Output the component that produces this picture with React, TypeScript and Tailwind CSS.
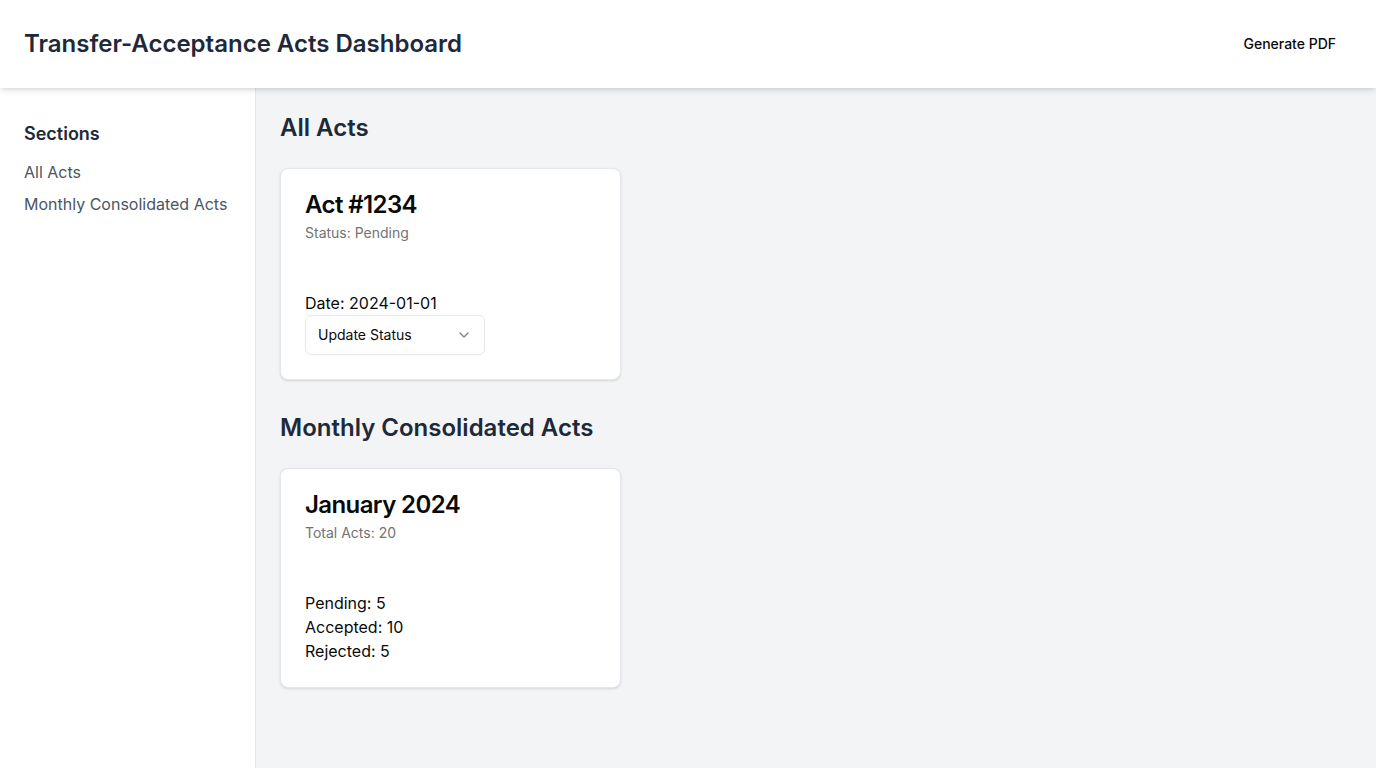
import { ChevronDown } from "lucide-react";

const ACTS = [{ id: "1234", status: "Pending", date: "2024-01-01" }];

const MONTHS = [{ name: "January 2024", total: 20, pending: 5, accepted: 10, rejected: 5 }];

function Card({ title, description, children }: { title: string; description: string; children: React.ReactNode }) {
    return (
        <div className="rounded-lg border border-gray-200 bg-white text-[#0a0a0a] shadow-sm">
            <div className="flex flex-col gap-1.5 p-6">
                <h3 className="text-2xl font-semibold leading-none tracking-tight">{title}</h3>
                <p className="text-sm text-neutral-500">{description}</p>
            </div>
            <div className="p-6">{children}</div>
        </div>
    );
}

export default function App() {
    return (
        <div className="flex min-h-screen flex-col bg-white font-['Inter',sans-serif]">
            <header className="relative z-10 flex items-center justify-between bg-white px-6 py-6 shadow-md">
                <h1 className="text-2xl font-semibold text-gray-800">Transfer-Acceptance Acts Dashboard</h1>
                <button className="h-10 rounded-md px-4 text-sm font-medium text-[#0a0a0a] hover:bg-gray-100">
                    Generate PDF
                </button>
            </header>

            <div className="flex flex-1">
                <aside className="w-64 shrink-0 border-r border-gray-200 bg-white px-6 pt-8">
                    <h2 className="mb-3 text-lg font-semibold text-gray-800">Sections</h2>
                    <nav className="flex flex-col gap-2">
                        <a href="#all" className="text-gray-600 hover:text-gray-900">All Acts</a>
                        <a href="#monthly" className="text-gray-600 hover:text-gray-900">Monthly Consolidated Acts</a>
                    </nav>
                </aside>

                <main className="flex-1 bg-gray-100 p-6">
                    <section id="all" className="mb-8">
                        <h2 className="mb-6 text-2xl font-semibold text-gray-800">All Acts</h2>
                        <div className="grid grid-cols-3 gap-6">
                            {ACTS.map((act) => (
                                <Card key={act.id} title={`Act #${act.id}`} description={`Status: ${act.status}`}>
                                    <p>Date: {act.date}</p>
                                    <button className="flex h-10 w-[180px] items-center justify-between rounded-md border border-gray-200 bg-white px-3 text-sm">
                                        <span>Update Status</span>
                                        <ChevronDown size={16} className="opacity-50" />
                                    </button>
                                </Card>
                            ))}
                        </div>
                    </section>

                    <section id="monthly">
                        <h2 className="mb-6 text-2xl font-semibold text-gray-800">Monthly Consolidated Acts</h2>
                        <div className="grid grid-cols-3 gap-6">
                            {MONTHS.map((m) => (
                                <Card key={m.name} title={m.name} description={`Total Acts: ${m.total}`}>
                                    <p>Pending: {m.pending}</p>
                                    <p>Accepted: {m.accepted}</p>
                                    <p>Rejected: {m.rejected}</p>
                                </Card>
                            ))}
                        </div>
                    </section>
                </main>
            </div>
        </div>
    );
}
